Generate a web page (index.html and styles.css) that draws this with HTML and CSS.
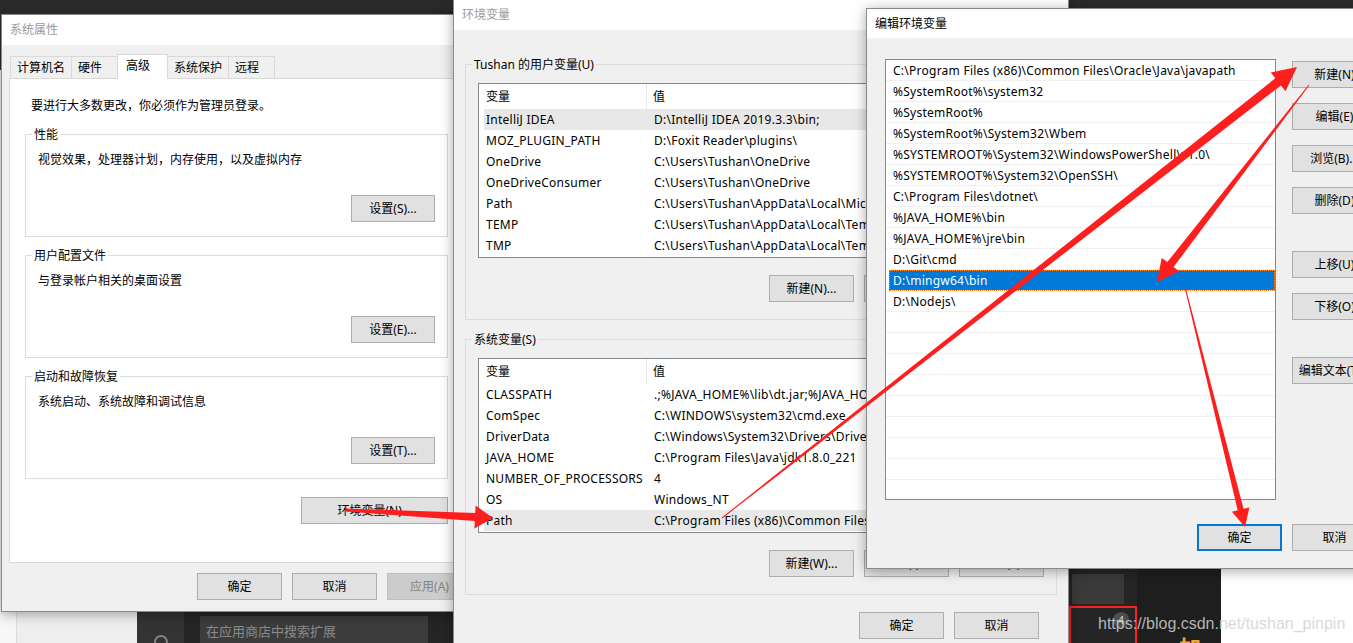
FILE: index.html
```html
<!DOCTYPE html>
<html lang="zh-CN">
<head>
    <meta charset="UTF-8">
    <meta name="viewport" content="width=device-width, initial-scale=1.0">
    <title>编辑环境变量</title>
    <link rel="stylesheet" href="styles.css">
</head>
<body>
<div class="desktop">
    <!-- editor window behind the dialogs -->
    <div class="bg-left"></div>
    <div class="bg-gray"></div>
    <div class="bg-activity"><span class="bg-icon"></span></div>
    <div class="bg-sidebar"><div class="ext-search">在应用商店中搜索扩展</div></div>
    <div class="bg-side2">
        <div class="bg-box"></div>
        <div class="red-box"><span class="badge">4</span></div>
    </div>
    <div class="bg-editor"><span class="promo">加载</span></div>
    <div class="bg-white"></div>

    <!-- 系统属性 -->
    <div class="win sys">
        <div class="titlebar">系统属性</div>
        <div class="win-body">
            <div class="tabs">
                <div class="tab">计算机名</div>
                <div class="tab">硬件</div>
                <div class="tab active">高级</div>
                <div class="tab">系统保护</div>
                <div class="tab">远程</div>
            </div>
            <div class="tab-panel">
                <p class="note">要进行大多数更改，你必须作为管理员登录。</p>
                <fieldset class="group">
                    <legend>性能</legend>
                    <p>视觉效果，处理器计划，内存使用，以及虚拟内存</p>
                    <div class="btn-row set-row"><button class="btn set">设置(S)...</button></div>
                </fieldset>
                <fieldset class="group">
                    <legend>用户配置文件</legend>
                    <p>与登录帐户相关的桌面设置</p>
                    <div class="btn-row set-row"><button class="btn set">设置(E)...</button></div>
                </fieldset>
                <fieldset class="group">
                    <legend>启动和故障恢复</legend>
                    <p>系统启动、系统故障和调试信息</p>
                    <div class="btn-row set-row"><button class="btn set">设置(T)...</button></div>
                </fieldset>
                <div class="btn-row env-row"><button class="btn wide">环境变量(N)...</button></div>
            </div>
            <div class="btn-row foot">
                <button class="btn">确定</button>
                <button class="btn">取消</button>
                <button class="btn" disabled>应用(A)</button>
            </div>
        </div>
    </div>

    <!-- 环境变量 -->
    <div class="win env">
        <div class="titlebar">环境变量</div>
        <div class="win-body">
            <fieldset class="group">
                <legend>Tushan 的用户变量(U)</legend>
                <div class="listview">
                    <div class="lv-head"><span class="col-name">变量</span><span class="col-val">值</span></div>
                    <div class="lv-row sel"><span class="col-name">IntelliJ IDEA</span><span class="col-val">D:\IntelliJ IDEA 2019.3.3\bin;</span></div>
                    <div class="lv-row"><span class="col-name">MOZ_PLUGIN_PATH</span><span class="col-val">D:\Foxit Reader\plugins\</span></div>
                    <div class="lv-row"><span class="col-name">OneDrive</span><span class="col-val">C:\Users\Tushan\OneDrive</span></div>
                    <div class="lv-row"><span class="col-name">OneDriveConsumer</span><span class="col-val">C:\Users\Tushan\OneDrive</span></div>
                    <div class="lv-row"><span class="col-name">Path</span><span class="col-val">C:\Users\Tushan\AppData\Local\Microsoft\WindowsApps;</span></div>
                    <div class="lv-row"><span class="col-name">TEMP</span><span class="col-val">C:\Users\Tushan\AppData\Local\Temp</span></div>
                    <div class="lv-row"><span class="col-name">TMP</span><span class="col-val">C:\Users\Tushan\AppData\Local\Temp</span></div>
                </div>
                <div class="btn-row">
                    <button class="btn">新建(N)...</button>
                    <button class="btn">编辑(E)...</button>
                    <button class="btn">删除(D)</button>
                </div>
            </fieldset>
            <fieldset class="group">
                <legend>系统变量(S)</legend>
                <div class="listview">
                    <div class="lv-head"><span class="col-name">变量</span><span class="col-val">值</span></div>
                    <div class="lv-row"><span class="col-name">CLASSPATH</span><span class="col-val">.;%JAVA_HOME%\lib\dt.jar;%JAVA_HOME%\lib\tools.jar;</span></div>
                    <div class="lv-row"><span class="col-name">ComSpec</span><span class="col-val">C:\WINDOWS\system32\cmd.exe</span></div>
                    <div class="lv-row"><span class="col-name">DriverData</span><span class="col-val">C:\Windows\System32\Drivers\DriverData</span></div>
                    <div class="lv-row"><span class="col-name">JAVA_HOME</span><span class="col-val">C:\Program Files\Java\jdk1.8.0_221</span></div>
                    <div class="lv-row"><span class="col-name">NUMBER_OF_PROCESSORS</span><span class="col-val">4</span></div>
                    <div class="lv-row"><span class="col-name">OS</span><span class="col-val">Windows_NT</span></div>
                    <div class="lv-row sel"><span class="col-name">Path</span><span class="col-val">C:\Program Files (x86)\Common Files\Oracle\Java\javapath;</span></div>
                </div>
                <div class="btn-row">
                    <button class="btn">新建(W)...</button>
                    <button class="btn">编辑(I)...</button>
                    <button class="btn">删除(L)</button>
                </div>
            </fieldset>
            <div class="btn-row foot">
                <button class="btn">确定</button>
                <button class="btn">取消</button>
            </div>
        </div>
    </div>

    <!-- 编辑环境变量 -->
    <div class="win edit">
        <div class="titlebar">编辑环境变量</div>
        <div class="win-body">
            <div class="path-list">
                <div class="path-row">C:\Program Files (x86)\Common Files\Oracle\Java\javapath</div>
                <div class="path-row">%SystemRoot%\system32</div>
                <div class="path-row">%SystemRoot%</div>
                <div class="path-row">%SystemRoot%\System32\Wbem</div>
                <div class="path-row">%SYSTEMROOT%\System32\WindowsPowerShell\v1.0\</div>
                <div class="path-row">%SYSTEMROOT%\System32\OpenSSH\</div>
                <div class="path-row">C:\Program Files\dotnet\</div>
                <div class="path-row">%JAVA_HOME%\bin</div>
                <div class="path-row">%JAVA_HOME%\jre\bin</div>
                <div class="path-row">D:\Git\cmd</div>
                <div class="path-row sel">D:\mingw64\bin</div>
                <div class="path-row">D:\Nodejs\</div>
                <div class="path-row"></div>
                <div class="path-row"></div>
                <div class="path-row"></div>
                <div class="path-row"></div>
                <div class="path-row"></div>
                <div class="path-row"></div>
                <div class="path-row"></div>
                <div class="path-row"></div>
                <div class="path-row"></div>
            </div>
            <div class="side-buttons">
                <button class="btn">新建(N)</button>
                <button class="btn">编辑(E)</button>
                <button class="btn">浏览(B)...</button>
                <button class="btn">删除(D)</button>
                <button class="btn sep">上移(U)</button>
                <button class="btn">下移(O)</button>
                <button class="btn sep">编辑文本(T)...</button>
            </div>
            <div class="btn-row edit-foot">
                <button class="btn default">确定</button>
                <button class="btn">取消</button>
            </div>
        </div>
    </div>

    <!-- red annotation arrows -->
    <svg class="marks" viewBox="0 0 1353 643" width="1353" height="643">
        <polygon points="346,508.5 475.2,513 475.6,505.5 493,518 474.4,528.5 474.8,521 346,511.5"/>
        <polygon points="722.3,518.4 1280.9,85.4 1285.5,91.2 1297,67 1270.7,72.4 1275.3,78.3 721.7,517.6"/>
        <polygon points="1308.6,84.7 1167.3,262.1 1161.7,257.9 1157,282 1179.1,271.3 1173.6,267 1309.4,85.3"/>
        <polygon points="1184.5,287.1 1237.7,510.3 1231.9,511.7 1245,527 1249.4,507.4 1243.5,508.8 1185.5,286.9"/>
    </svg>

    <div class="watermark">https://blog.csdn.net/tushan_pinpin</div>
</div>
</body>
</html>
```

FILE: styles.css
```css
* {
    box-sizing: border-box;
}

body {
    margin: 0;
    font-family: "Noto Sans", "Noto Sans CJK SC", sans-serif;
    font-size: 12px;
    color: #000;
}

.desktop {
    position: relative;
    width: 1353px;
    height: 643px;
    overflow: hidden;
    background-color: #2b2b2b;
}

/* ---------- editor window pieces behind the dialogs ---------- */

.bg-left,
.bg-gray,
.bg-activity,
.bg-sidebar,
.bg-side2,
.bg-editor,
.bg-white {
    position: absolute;
    bottom: 0;
}

.bg-left {
    left: 0;
    top: 70px;
    width: 16px;
    background-color: #f7f7f7;
}

.bg-gray {
    left: 16px;
    top: 600px;
    width: 121px;
    background-color: #eeeeee;
    border-left: 1px solid #dddddd;
}

.bg-activity {
    left: 137px;
    top: 600px;
    width: 47px;
    background-color: #333333;
}

.bg-icon {
    position: absolute;
    left: 17px;
    top: 35px;
    width: 14px;
    height: 14px;
    border: 2px solid #858585;
    border-radius: 50%;
}

.bg-sidebar {
    left: 184px;
    top: 600px;
    width: 270px;
    background-color: #252526;
}

.ext-search {
    margin: 16px 0 0 16px;
    width: 228px;
    height: 30px;
    padding: 5px 6px;
    background-color: #3c3c3c;
    color: #8b8b8b;
    font-size: 13px;
    line-height: 20px;
}

.bg-side2 {
    left: 1069px;
    top: 560px;
    width: 68px;
    background-color: #252526;
}

.bg-box {
    margin: 14px 0 0 3px;
    width: 52px;
    height: 30px;
    background-color: #3a3a3a;
}

.red-box {
    position: relative;
    margin-top: 2px;
    height: 60px;
    border: 2px solid #ff1f1f;
    border-bottom: none;
}

.badge {
    position: absolute;
    left: 42px;
    top: 4px;
    width: 16px;
    height: 16px;
    border-radius: 50%;
    background-color: #4d4d4d;
    color: #dddddd;
    font-size: 10px;
    line-height: 16px;
    text-align: center;
}

.bg-editor {
    left: 1137px;
    top: 560px;
    width: 84px;
    background-color: #1e1e1e;
}

.promo {
    position: absolute;
    left: 42px;
    top: 75px;
    color: #f6a53a;
    font-size: 22px;
    font-weight: bold;
    line-height: 24px;
}

.bg-white {
    left: 1221px;
    top: 560px;
    right: 0;
    background-color: #ffffff;
}

/* ---------- windows ---------- */

.win {
    position: absolute;
    display: flex;
    flex-direction: column;
    border: 1px solid #8a8a8a;
    background-color: #f0f0f0;
    box-shadow: 0 2px 12px rgba(0, 0, 0, 0.35);
}

.titlebar {
    flex: none;
    height: 30px;
    padding-left: 8px;
    line-height: 30px;
    background-color: #ffffff;
    color: #9a9a9a;
}

.win-body {
    flex: 1;
}

.btn {
    width: 85px;
    height: 27px;
    padding: 0;
    font: inherit;
    color: #000;
    background-color: #e1e1e1;
    border: 1px solid #adadad;
    border-radius: 0;
    line-height: 25px;
    text-align: center;
    white-space: nowrap;
}

.btn:disabled {
    background-color: #cccccc;
    border-color: #bfbfbf;
    color: #838383;
}

.btn-row {
    display: flex;
    justify-content: flex-end;
    gap: 10px;
}

.group {
    margin: 0;
    min-width: 0;
    border: 1px solid #dcdcdc;
}

.group legend {
    margin-left: -6px;
    padding: 0 2px;
    line-height: 17px;
}

.group p {
    margin: 0;
    padding-top: 1px;
    line-height: 16px;
}

/* 系统属性 */

.sys {
    left: 1px;
    top: 14px;
    width: 490px;
    height: 598px;
    z-index: 1;
}

.sys .win-body {
    padding: 9px 0 0 7px;
}

.tabs {
    display: flex;
    align-items: flex-end;
    height: 24px;
    margin-left: 1px;
}

.tab {
    height: 22px;
    min-width: 47px;
    margin-right: -1px;
    padding: 1px 6px 0;
    border: 1px solid #d9d9d9;
    border-bottom: none;
    line-height: 20px;
}

.tab.active {
    position: relative;
    z-index: 1;
    height: 25px;
    min-width: 51px;
    margin-bottom: -1px;
    padding: 0 8px;
    background-color: #ffffff;
    line-height: 22px;
}

.tab-panel {
    width: 455px;
    height: 485px;
    border: 1px solid #d9d9d9;
    background-color: #ffffff;
}

.note {
    margin: 0;
    padding: 19px 0 0 21px;
    line-height: 16px;
}

.sys .group {
    margin: 12px 15px 0;
    padding: 8px 12px 14px;
}

.sys .group + .group {
    margin-top: 10px;
}

.set-row {
    margin-top: 27px;
}

.btn.set {
    width: 84px;
}

.env-row {
    margin: 18px 15px 0 0;
}

.btn.wide {
    width: 147px;
}

.sys .foot {
    width: 463px;
    margin-top: 10px;
}

/* 环境变量 */

.env {
    left: 453px;
    top: -1px;
    width: 616px;
    height: 680px;
    z-index: 2;
}

.env .win-body {
    padding: 26px 11px 0;
}

.env .group {
    padding: 10px 12px 17px;
}

.env .group + .group {
    margin-top: 11px;
}

.listview {
    margin-bottom: 17px;
    padding-bottom: 1px;
    border: 1px solid #828790;
    background-color: #ffffff;
    white-space: nowrap;
    overflow: hidden;
}

.lv-head {
    display: flex;
    height: 25px;
    line-height: 25px;
}

.lv-head .col-name {
    flex: none;
    width: 168px;
    padding-left: 7px;
    border-right: 1px solid #e5e5e5;
}

.lv-head .col-val {
    padding-left: 6px;
}

.lv-row {
    display: flex;
    height: 21px;
    margin-left: 5px;
    line-height: 21px;
    letter-spacing: 0.25px;
}

.lv-row .col-name {
    flex: none;
    width: 163px;
    padding-left: 2px;
}

.lv-row .col-val {
    padding-left: 7px;
}

.lv-row.sel {
    background-color: #e8e8e8;
}

.env .foot {
    margin-top: 17px;
    padding-right: 18px;
}

/* 编辑环境变量 */

.edit {
    left: 866px;
    top: 8px;
    width: 520px;
    height: 561px;
    z-index: 3;
}

.edit .titlebar {
    height: 29px;
    line-height: 29px;
    color: #000;
}

.edit .win-body {
    display: grid;
    grid-template-columns: 391px 85px;
    column-gap: 16px;
    row-gap: 24px;
    align-content: start;
    padding: 21px 0 0 18px;
}

.path-list {
    height: 441px;
    border: 1px solid #828790;
    background-color: #ffffff;
    overflow: hidden;
}

.path-row {
    height: 21px;
    padding: 2px 0 0 7px;
    border-bottom: 1px solid #f0f0f0;
    line-height: 18px;
    letter-spacing: 0.25px;
    white-space: nowrap;
}

.path-row.sel {
    margin-left: 3px;
    padding-left: 4px;
    background-color: #0078d7;
    color: #ffffff;
    outline: 1px dotted #ff8728;
    outline-offset: -1px;
}

.side-buttons {
    display: flex;
    flex-direction: column;
    gap: 15px;
    padding-top: 2px;
}

.side-buttons .sep {
    margin-top: 22px;
}

.edit-foot {
    grid-column: 1 / -1;
}

.btn.default {
    border: 2px solid #0078d7;
    line-height: 23px;
}

/* ---------- annotations ---------- */

.marks {
    position: absolute;
    left: 0;
    top: 0;
    z-index: 10;
    fill: #ff1e1e;
}

.watermark {
    position: absolute;
    left: 1098px;
    top: 614px;
    z-index: 11;
    font-family: "Liberation Sans", Arial, sans-serif;
    font-size: 16px;
    line-height: 20px;
    color: rgba(210, 210, 210, 0.85);
}
```
